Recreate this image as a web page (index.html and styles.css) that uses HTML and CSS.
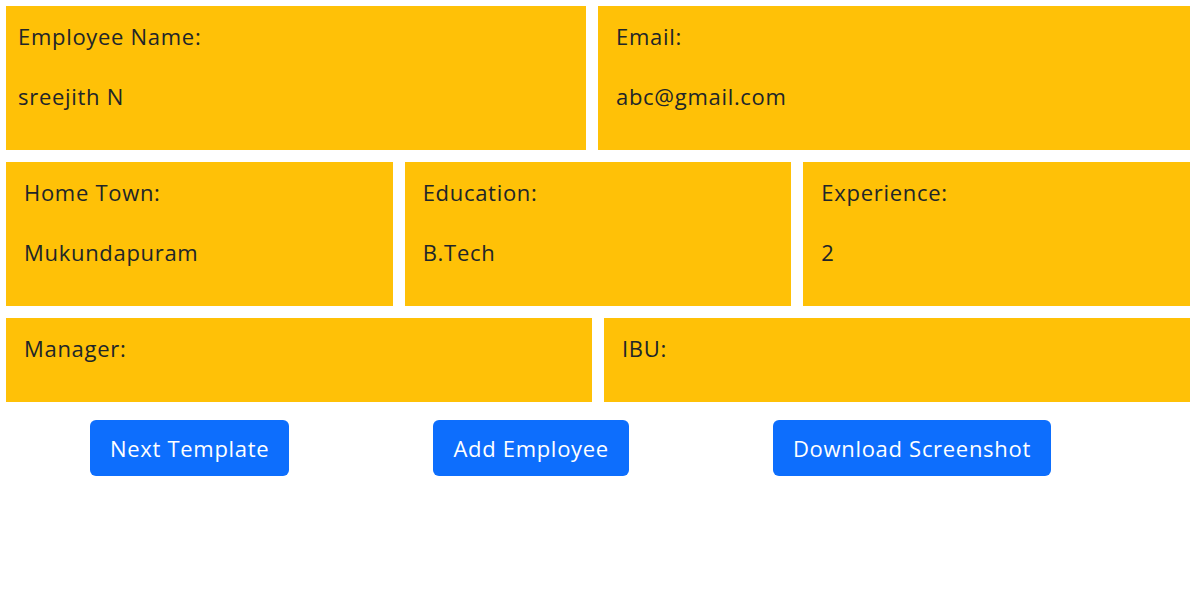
FILE: index.html
```html
<!DOCTYPE html>
<html>
<head>
<meta charset="utf-8">
<link rel="stylesheet" href="styles.css">
</head>
<body>
<div class="page">
  <div class="row">
    <div class="card first">
      <p class="label">Employee Name:</p>
      <p class="value">sreejith N</p>
    </div>
    <div class="card">
      <p class="label">Email:</p>
      <p class="value">abc@gmail.com</p>
    </div>
  </div>
  <div class="row">
    <div class="card">
      <p class="label">Home Town:</p>
      <p class="value">Mukundapuram</p>
    </div>
    <div class="card">
      <p class="label">Education:</p>
      <p class="value">B.Tech</p>
    </div>
    <div class="card">
      <p class="label">Experience:</p>
      <p class="value">2</p>
    </div>
  </div>
  <div class="row short">
    <div class="card">
      <p class="label">Manager:</p>
    </div>
    <div class="card">
      <p class="label">IBU:</p>
    </div>
  </div>
  <div class="buttons">
    <button class="btn">Next Template</button>
    <button class="btn">Add Employee</button>
    <button class="btn">Download Screenshot</button>
  </div>
</div>
</body>
</html>
```
FILE: styles.css
```css
* { box-sizing: border-box; }
html, body { margin: 0; padding: 0; background: #fff; }
body {
  font-family: "Open Sans", "Noto Sans", sans-serif;
  color: #212529;
  font-size: 22px;
  letter-spacing: 0.7px;
}
.page {
  padding: 6px 7px 0 6px;
  width: 1197px;
}
.row {
  display: flex;
  gap: 12px;
  margin-bottom: 12px;
}
.card {
  flex: 1 1 0;
  background: #ffc107;
  height: 144px;
  padding: 15px 18px 0 18px;
}
.card.first { padding-left: 12px; flex: 0 0 580px; }
.short .card { height: 84px; }
.short .card:first-child { flex: 0 0 586px; }
.label, .value {
  margin: 0;
  line-height: 30px;
  white-space: nowrap;
}
.value { margin-top: 30px; }
.buttons {
  display: flex;
  gap: 144px;
  padding-left: 84px;
  margin-top: 18px;
}
.btn {
  font-family: inherit;
  font-size: 22px;
  letter-spacing: 0.7px;
  color: #fff;
  background: #0d6efd;
  border: none;
  border-radius: 6px;
  height: 56px;
  padding: 0 20px;
  line-height: 1;
}
```
